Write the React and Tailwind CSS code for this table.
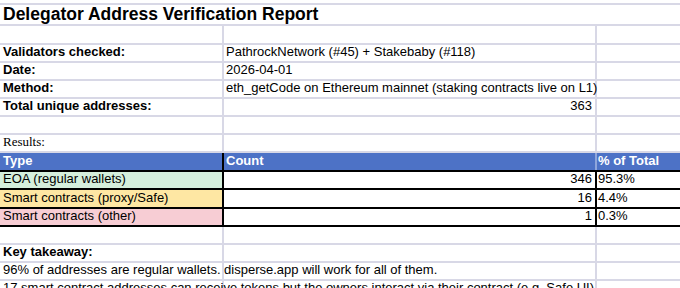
import React from "react";

const G = "border-[#d8d8e6]";

function Row({ h, a, b, c, kind = "plain", bg = "", aClass = "", bClass = "", cClass = "", noV = false }) {
  const black = kind === "table";
  const header = kind === "header";
  const rowBorder = black || header ? "border-black" : G;
  return (
    <div
      className={`flex border-b-2 ${rowBorder} ${header ? "bg-[#4d72c6] text-white font-bold" : ""}`}
      style={{ height: h }}
    >
      <div
        className={`w-[224px] shrink-0 flex items-end pb-[2px] pl-[3px] whitespace-nowrap overflow-visible relative z-10 ${
          noV ? "" : black || header ? "border-r-2 border-black" : `border-r-2 ${G}`
        } ${bg} ${aClass}`}
      >
        {a}
      </div>
      <div
        className={`w-[373px] shrink-0 flex items-end pb-[2px] pl-[2px] pr-[3px] whitespace-nowrap ${
          noV ? "" : black ? "border-r-2 border-black" : header ? "border-r-2 border-[#8fa6dc]" : `border-r-2 ${G}`
        } ${bClass}`}
      >
        {b}
      </div>
      <div className={`flex-1 flex items-end pb-[2px] pl-[1px] whitespace-nowrap ${cClass}`}>{c}</div>
    </div>
  );
}

export default function App() {
  return (
    <div
      className="w-[680px] h-[288px] overflow-hidden bg-white text-black text-[13px] leading-[15px]"
      style={{ fontFamily: '"Liberation Sans", Arial, sans-serif' }}
    >
      <Row h={5} noV />
      <div className={`flex items-end border-b-2 ${G} h-[21px] pl-[3px]`}>
        <span className="text-[17.5px] leading-[19px] font-bold whitespace-nowrap">
          Delegator Address Verification Report
        </span>
      </div>
      <Row h={19} />
      <Row h={18} a="Validators checked:" aClass="font-bold" b="PathrockNetwork (#45) + Stakebaby (#118)" />
      <Row h={18} a="Date:" aClass="font-bold" b="2026-04-01" />
      <Row
        h={18}
        a="Method:"
        aClass="font-bold"
        b="eth_getCode on Ethereum mainnet (staking contracts live on L1)"
      />
      <Row h={18} a="Total unique addresses:" aClass="font-bold" b="363" bClass="justify-end" />
      <Row h={18} />
      <Row
        h={18}
        a={<span style={{ fontFamily: '"Liberation Serif", "Times New Roman", serif' }}>Results:</span>}
      />
      <Row h={19} kind="header" a="Type" b="Count" c="% of Total" />
      <Row h={18} kind="table" bg="bg-[#d5efdc]" a="EOA (regular wallets)" b="346" bClass="justify-end" c="95.3%" />
      <Row h={19} kind="table" bg="bg-[#fee7a3]" a="Smart contracts (proxy/Safe)" b="16" bClass="justify-end" c="4.4%" />
      <Row h={18} kind="table" bg="bg-[#f7cdd4]" a="Smart contracts (other)" b="1" bClass="justify-end" c="0.3%" />
      <Row h={18} />
      <Row h={18} a="Key takeaway:" aClass="font-bold" />
      <Row h={18} a="96% of addresses are regular wallets. disperse.app will work for all of them." />
      <Row
        h={18}
        a="17 smart contract addresses can receive tokens but the owners interact via their contract (e.g. Safe UI)."
      />
    </div>
  );
}
